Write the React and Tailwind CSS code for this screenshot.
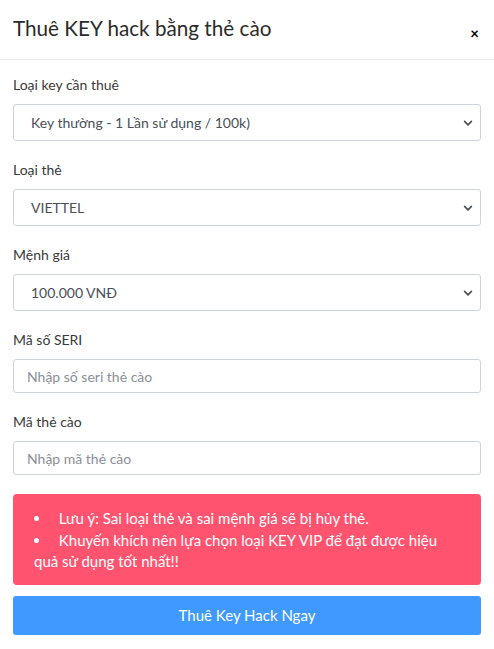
import React from "react";

const Chevron = () => (
  <svg
    className="pointer-events-none absolute right-[8px] top-1/2 -translate-y-1/2"
    width="10"
    height="10"
    viewBox="0 0 16 16"
  >
    <path
      d="M2.5 5.5 8 11l5.5-5.5"
      fill="none"
      stroke="#495057"
      strokeWidth="2.6"
      strokeLinecap="round"
      strokeLinejoin="round"
    />
  </svg>
);

const SelectField = ({ label, value }) => (
  <div className="flex flex-col">
    <label className="h-[20px] text-[14px] leading-[20px] text-[#3a3a3a]">
      {label}
    </label>
    <div className="relative mt-[9px]">
      <select
        defaultValue={value}
        className="h-[37px] w-full appearance-none rounded-[3px] border border-[#cfd4da] bg-white pl-[17px] text-[14px] text-[#495057] outline-none"
      >
        <option>{value}</option>
      </select>
      <Chevron />
    </div>
  </div>
);

const InputField = ({ label, placeholder }) => (
  <div className="flex flex-col">
    <label className="h-[20px] text-[14px] leading-[20px] text-[#3a3a3a]">
      {label}
    </label>
    <input
      placeholder={placeholder}
      className="mt-[9px] h-[34px] w-full rounded-[3px] border border-[#cfd4da] bg-white px-[13px] text-[14px] text-[#495057] outline-none placeholder:text-[#8a9096]"
    />
  </div>
);

export default function App() {
  return (
    <div className="min-h-[649px] w-full bg-white font-['Lato','Noto_Sans',sans-serif]">
      <div className="flex h-[60px] items-start justify-between border-b border-[#e9ecef] px-[13px] pt-[15px]">
        <h4 className="text-[20.7px] leading-[26px] text-[#2b2b2b]">
          Thuê KEY hack bằng thẻ cào
        </h4>
        <button className="mt-[8px] mr-[2px] text-[15px] font-bold leading-[20px] text-black">
          ×
        </button>
      </div>

      <div className="flex flex-col px-[13px] pt-[15px]">
        <div className="flex flex-col gap-[19px]">
          <SelectField
            label="Loại key cần thuê"
            value="Key thường - 1 Lần sử dụng / 100k)"
          />
          <SelectField label="Loại thẻ" value="VIETTEL" />
          <SelectField label="Mệnh giá" value="100.000 VNĐ" />
          <InputField label="Mã số SERI" placeholder="Nhập số seri thẻ cào" />
          <InputField label="Mã thẻ cào" placeholder="Nhập mã thẻ cào" />
        </div>

        <div className="mt-[19px] rounded-[4px] bg-[#ff5370] px-[21px] pt-[14px] pb-[12px] text-[15px] leading-[21.5px] text-white">
          <ul className="list-inside list-disc">
            <li>&nbsp;Lưu ý: Sai loại thẻ và sai mệnh giá sẽ bị hủy thẻ.</li>
            <li>
              &nbsp;Khuyến khích nên lựa chọn loại KEY VIP để đạt được hiệu
              quả sử dụng tốt nhất!!
            </li>
          </ul>
        </div>

        <button className="mt-[11px] h-[39px] w-full rounded-[3px] bg-[#4099ff] text-[15px] text-white">
          Thuê Key Hack Ngay
        </button>
      </div>
    </div>
  );
}
